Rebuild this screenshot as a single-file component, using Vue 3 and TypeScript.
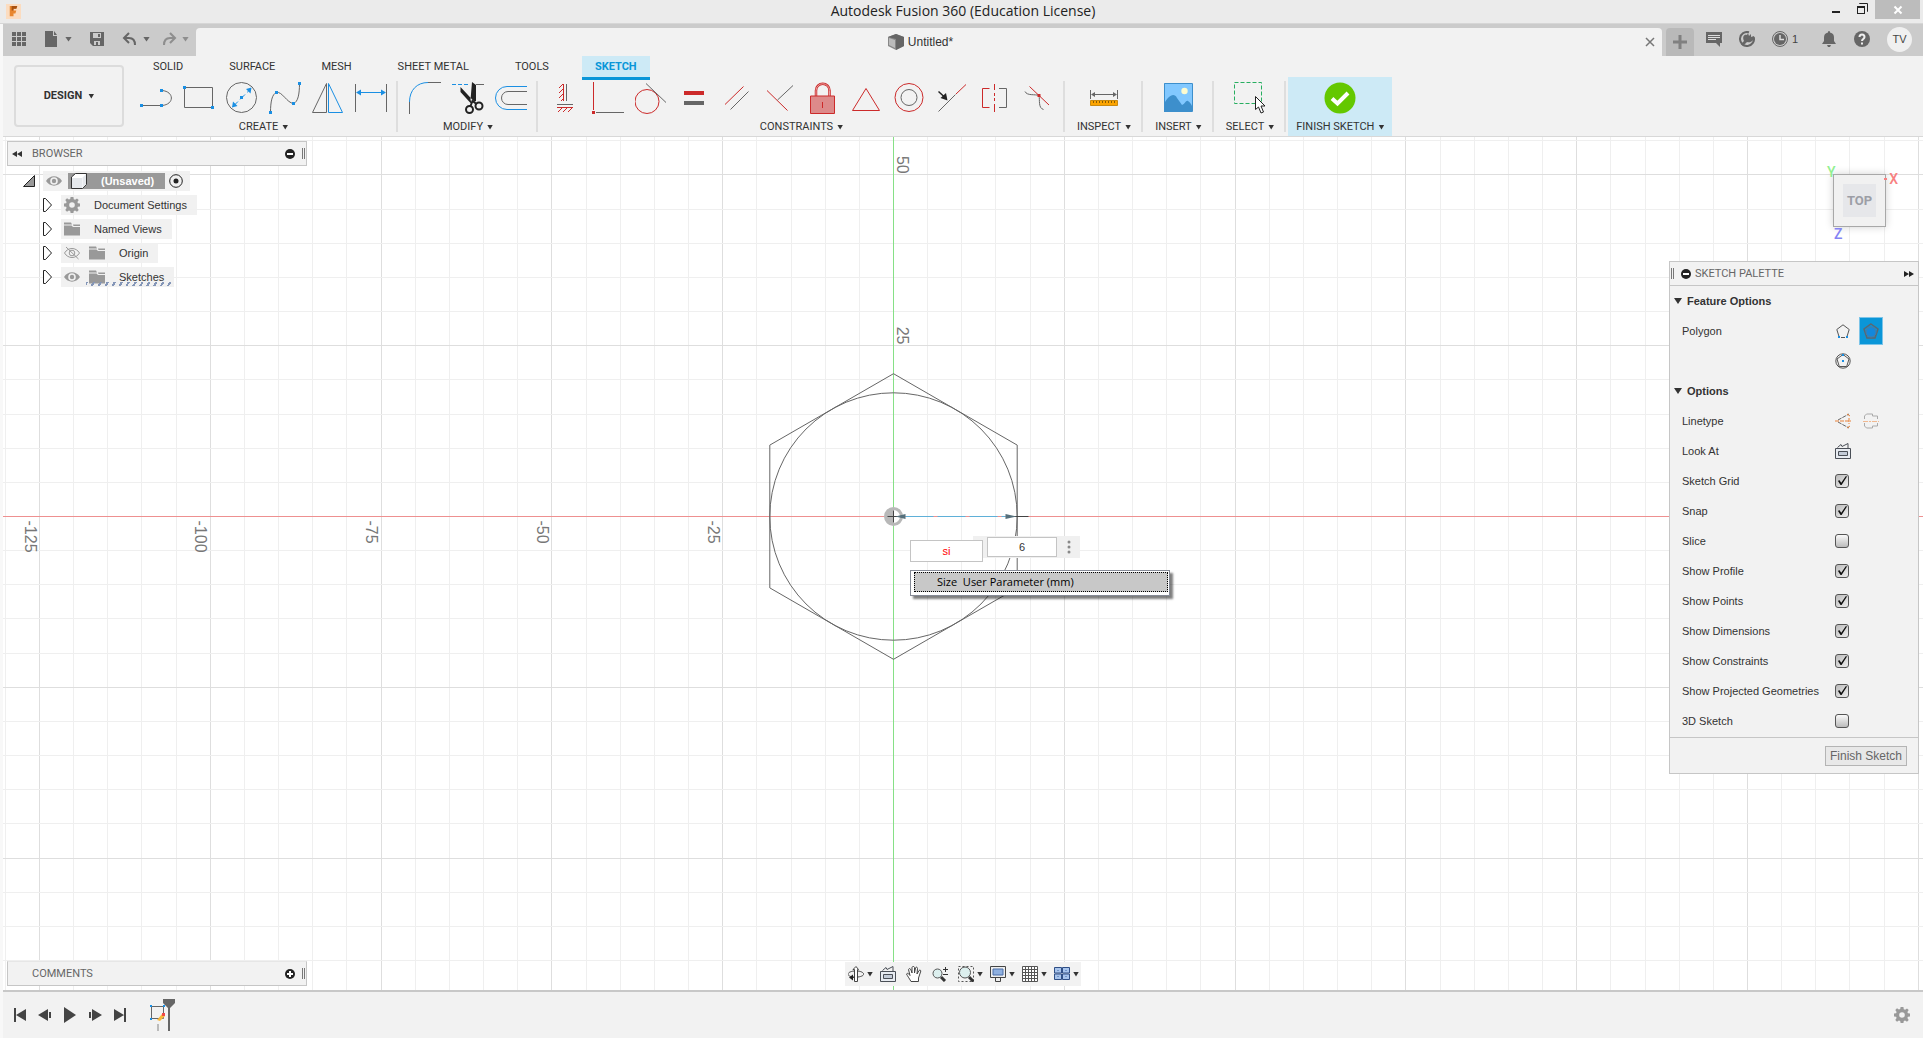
<script setup lang="ts">
import { ref } from 'vue'

interface Tool { name: string; art: string }
interface Group { label: string; tools: Tool[] }
interface TreeRow { label: string; eye?: 'on' | 'off'; icon: 'gear' | 'folder'; marked?: boolean }
interface Option { label: string; on: boolean }

const G = 'stroke="#666"'
const B = 'stroke="#1a8fe3"'
const R = 'stroke="#cc2a2a"'
const dot = (x: number, y: number, c = '#1a8fe3') =>
  `<rect x="${x - 1.5}" y="${y - 1.5}" width="3" height="3" fill="${c}" stroke="none"/>`

const createTools: Tool[] = [
  { name: 'Line', art: `<path ${G} d="M1.5 23.5H22C34.500 22.500 34.500 9.500 22 8.500"/>${dot(1.5, 23.5)}${dot(21.5, 23.5)}${dot(21.5, 8.5)}` },
  { name: 'Rectangle', art: `<path ${G} d="M1.500 5.500h28v20h-28z"/>${dot(1.5, 5.5)}${dot(29.5, 25.5)}` },
  { name: 'Circle', art: `<circle ${G} cx="15.5" cy="15.5" r="15"/><path ${B} stroke-dasharray="7 3" d="M7 24.500L24.500 7"/><path fill="#1a8fe3" d="M25.500 5.500l-1 6-4.500-4.500zM6 25.500l1-6 4.500 4.500z"/>${dot(15.5, 15.5)}` },
  { name: 'Spline', art: `<path ${G} d="M1.500 30.500C1.500 20 3 12 7.500 10.500 13 9 18 21 24.500 21.500 29 20 30.500 12 30.500 1.500"/>${dot(1.5, 30.5)}${dot(7.5, 10.5)}${dot(24.5, 21.5)}${dot(30.5, 1.5)}` },
  { name: 'Mirror', art: `<path ${G} d="M14.500 1.500v29h-14z"/><path ${B} d="M16.500 1.500v29h14z"/>` },
  { name: 'Sketch Dimension', art: `<path ${G} d="M.5 2v28M31.500 2v28"/><path ${B} d="M2 10.500h28"/><path fill="#1a8fe3" d="M1 10.500l5-3v6zM31 10.500l-5-3v6z"/>` },
]
const modifyTools: Tool[] = [
  { name: 'Fillet', art: `<path ${G} d="M.5 32V20M19 .5h13"/><path ${B} d="M.5 20C.5 8 8 .5 19 .5"/>` },
  { name: 'Trim', art: `<path ${B} d="M0 2.500h16" stroke-dasharray="4 2"/><path ${G} d="M24 2.500h8"/><path fill="#222" d="M8.500 5v5l10 11 4-1zM20 0l4 3v16l-4 2-1.500-3z"/><circle cx="17.500" cy="27.500" r="3.500" stroke="#222" stroke-width="2"/><circle cx="27" cy="24" r="3.500" stroke="#222" stroke-width="2"/><path stroke="#222" stroke-width="2" d="M18.500 24l2-5 4 3"/>` },
  { name: 'Offset', art: `<path ${B} d="M32 4.500H12a11.500 11.500 0 0 0 0 23h20"/><path ${G} d="M32 9.500H13a6.500 6.500 0 0 0 0 13h19"/>` },
]
const constraintTools: Tool[] = [
  { name: 'Horizontal/Vertical', art: `<path ${R} d="M14.500 2v17M14 2l-4 4M14 7l-4 4M14 12l-4 4M14 17l-2 2M8 25.500h16M13 26l-4 4M18 26l-4 4M23 26l-4 4"/><path ${G} d="M17.500 2v17M8 22.500h16"/>` },
  { name: 'Coincident', art: `<path ${R} d="M1.500 0v28"/><path ${G} d="M4 30.500h28"/>${dot(1.5, 30.5, '#cc2a2a')}` },
  { name: 'Tangent', art: `<circle ${R} cx="12" cy="19.500" r="12"/><path ${G} d="M11 1.500l20 19"/>` },
  { name: 'Equal', art: `<path fill="#cc2a2a" d="M6 9h20v4H6z"/><path fill="#666" d="M6 19h20v4H6z"/>` },
  { name: 'Parallel', art: `<path ${R} d="M4 22.500l18.500-18"/><path ${G} d="M9.500 27.500l18-18"/>` },
  { name: 'Perpendicular', art: `<path ${R} d="M3 8.500l20.500 20"/><path ${G} d="M13.500 18l15.500-14.500"/>` },
  { name: 'Fix', art: `<path stroke="#cc2a2a" stroke-width="2.500" d="M9 14V8.500a6.500 6.500 0 0 1 13.500 0V14"/><path stroke="#e8a0a0" stroke-width="1" d="M9 14V8.500a6.500 6.500 0 0 1 13.500 0V14"/><path fill="#dd8a8a" ${R} d="M3.500 14h24v17.500h-24z"/><path ${R} d="M15.500 20v6"/>` },
  { name: 'Midpoint', art: `<path ${R} d="M16 6.500l13.500 22h-27z"/>` },
  { name: 'Concentric', art: `<circle ${R} cx="16" cy="15.500" r="14"/><circle ${G} cx="16" cy="15.500" r="8"/>` },
  { name: 'Collinear', art: `<path ${G} d="M2.500 29.500l17-17"/><path ${R} d="M20 12l10-9.500"/><path stroke="#222" stroke-width="1.500" d="M2.500 9.500L9 15.500"/><path fill="#222" d="M11.500 18.500L4.500 16 10 11z"/>` },
  { name: 'Symmetry', art: `<path ${R} d="M10.500 6.500H3.500v19h7M15.500 2v6M15.500 11v3M15.500 16v3M15.500 22v8"/><path ${G} d="M20 6.500h7.500v19H20"/>` },
  { name: 'Curvature', art: `<path ${R} d="M7.500 4.500L27 23"/><path ${G} d="M3 9.500C5 14 13 12 17 13.500 18 18 16 26 21.500 27.500"/>${dot(17, 13.5, '#cc2a2a')}` },
]
const groups: Group[] = [
  { label: 'CREATE', tools: createTools },
  { label: 'MODIFY', tools: modifyTools },
  { label: 'CONSTRAINTS', tools: constraintTools },
  { label: 'INSPECT', tools: [{ name: 'Measure', art: `<path ${G} d="M2.500 8v9M29.500 8v9M4 12.500h24"/><path fill="#666" d="M3 12.500l4-2.500v5zM29 12.500l-4-2.500v5z"/><path fill="#fca400" stroke="#c98a10" d="M2.500 18.500h27v5h-27z"/><path stroke="#8a5c00" d="M5.500 19v2M8.500 19v2M11.500 19v2M14.500 19v2M17.500 19v2M20.500 19v2M23.500 19v2M26.500 19v2"/>` }] },
  { label: 'INSERT', tools: [{ name: 'Insert', art: `<path fill="#82c8ff" d="M2 1h28v29H2z"/><circle cx="22.500" cy="9" r="3.200" fill="#fdfbd0"/><path fill="#3d8fcc" d="M2 22C6 14 12 10 15 16L20 23C23 22 24 18 26 19 28 20 29 22 30 24v6H2z"/><path stroke="#3d8fcc" d="M2.500 1.500h28v28h-28z"/>` }] },
  { label: 'SELECT', tools: [{ name: 'Select', art: `<path stroke="#27ae60" stroke-dasharray="4 2" d="M.5 .5h27v21H.5z"/><path fill="#fff" stroke="#222" d="M21.500 14.500v13l3-2.500 2.500 6 2.500-1-2.500-6h4z"/>` }] },
]
const finishArt = `<circle cx="16" cy="16" r="15.500" fill="#64c800"/><path stroke="#fff" stroke-width="4" d="M8 16.500l5.500 5L24 11"/>`

const tabs = ['SOLID', 'SURFACE', 'MESH', 'SHEET METAL', 'TOOLS', 'SKETCH']
const activeTab = ref('SKETCH')

const tree: TreeRow[] = [
  { label: 'Document Settings', icon: 'gear' },
  { label: 'Named Views', icon: 'folder' },
  { label: 'Origin', icon: 'folder', eye: 'off' },
  { label: 'Sketches', icon: 'folder', eye: 'on', marked: true },
]
const gear = `<path fill="#999" fill-rule="evenodd" d="M6.600 0h2.800l.4 2.200 1.300.5L13 1.400 14.700 3l-1.300 1.900.5 1.300 2.100.4v2.800l-2.100.4-.5 1.300 1.300 1.900-1.700 1.700-1.900-1.300-1.300.5L9.400 16H6.600l-.4-2.100-1.300-.5L3 14.700 1.300 13l1.300-1.900-.5-1.300L0 9.400V6.600l2.100-.4.5-1.300L1.300 3 3 1.300l1.900 1.300 1.300-.5zM8 5.200a2.800 2.800 0 1 0 0 5.600 2.800 2.800 0 0 0 0-5.600z"/>`
const folder = `<path fill="#999" d="M0 4.500h7.500L9 6h7v8.500H0zM0 1.500h7L8 3.500H0zM9 3.500h7V5H9.500z"/>`
const eyeOn = `<path fill="#999" fill-rule="evenodd" d="M0 8C4 1.800 12 1.800 16 8 12 14.200 4 14.200 0 8zm8-3.800a3.800 3.800 0 1 0 0 7.600 3.800 3.800 0 0 0 0-7.600z"/><circle cx="8" cy="8" r="2.200" fill="#999"/>`
const eyeOff = `<path stroke="#999" d="M.5 8C4 2 12 2 15.500 8 12 14 4 14 .5 8zM2 2l12.500 12"/><circle cx="8" cy="8" r="2.800" stroke="#999"/>`
const lookAt = `<path fill="#e8ecf2" stroke="#4a4f57" d="M.5 5.500h15v10H.5z"/><path fill="#c4ccd8" stroke="#4a4f57" d="M3.500 8.500h9v4h-9z"/><path stroke="#4a4f57" d="M2.500 4.500L6 1.500l1 2 6-3v4.500"/>`

const options = ref<Option[]>([
  { label: 'Sketch Grid', on: true },
  { label: 'Snap', on: true },
  { label: 'Slice', on: false },
  { label: 'Show Profile', on: true },
  { label: 'Show Points', on: true },
  { label: 'Show Dimensions', on: true },
  { label: 'Show Constraints', on: true },
  { label: 'Show Projected Geometries', on: true },
  { label: '3D Sketch', on: false },
])

const navTools = [
  { name: 'Orbit', menu: true, art: `<path stroke="#444" d="M6 5C-2 6-2 10.500 6 11M10 11C18 10 17 6 10 5M4 11.500h5"/><path fill="#fff" stroke="#444" d="M6.500 15.500v-12h-1.500L8 .5l2.500 3H9.500v12z"/><path fill="#222" d="M1 11.500l4-3v6z"/>` },
  { name: 'Look At', menu: false, art: lookAt },
  { name: 'Pan', menu: false, art: `<path fill="#fff" stroke="#444" d="M5 15.500C3 12 1.500 10 .5 8c1-1.500 2.500 0 3.500 1.500L2.500 3.500C3 2 4.500 2.500 5 4l1 3V1.500c.5-1.500 2-1.500 2.500 0V7l1-5c.5-1.500 2-1 2 .5L11 8l2-3.500c1-1 2.500 0 1.500 1.500L12.500 12v3.500z"/>` },
  { name: 'Zoom', menu: false, art: `<circle cx="5.500" cy="7.500" r="4.500" fill="#dcefee" stroke="#555"/><path stroke="#333" stroke-width="3" d="M9 11l4 4"/><path stroke="#333" d="M11 3.500h5M13.500 1v5M11 8.500h5"/>` },
  { name: 'Zoom Window', menu: true, art: `<path stroke="#555" stroke-dasharray="2 2" d="M.5 .5h15v15H.5z"/><circle cx="7" cy="6.500" r="5.500" fill="#dcefee" stroke="#555"/><path stroke="#333" stroke-width="3" d="M11 11l4.500 4.500"/>` },
  { name: 'Display', menu: true, art: `<path fill="#eee" stroke="#444" d="M.5 .5h15v11H.5zM5.500 12v3.500h5V12"/><path fill="#8fb0e0" stroke="#4a6ea8" d="M3 3h10v6H3z"/>` },
  { name: 'Grid', menu: true, art: `<path fill="#fff" stroke="#555" d="M.5 .5h15v15H.5zM3.500 1v14M6.500 1v14M9.500 1v14M12.500 1v14M1 3.500h14M1 6.500h14M1 9.500h14M1 12.500h14"/>` },
  { name: 'Viewports', menu: true, art: `<path fill="#a8c4ec" stroke="#2f4f86" d="M.5 1.500h7v5.500h-7zM8.500 1.500h7v5.500h-7zM.5 8h7v5.500h-7zM8.500 8h7v5.500h-7z"/><path stroke="#6f93c8" d="M3 4.500h2M11 4.500h2M3 10.500h2M11 10.500h2"/>` },
]
const playback = [
  { name: 'Go to start', art: `<path fill="#444" d="M2 1h2v14H2zM14 2v12L4 8z"/>` },
  { name: 'Step back', art: `<path fill="#444" d="M11 2v12L1 8zM12 5h2v6h-2z"/>` },
  { name: 'Play', art: `<path fill="#444" d="M2 0v16l12-8z"/>` },
  { name: 'Step forward', art: `<path fill="#444" d="M5 2v12l10-6zM2 5h2v6H2z"/>` },
  { name: 'Go to end', art: `<path fill="#444" d="M2 2v12l10-6zM12 1h2v14h-2z"/>` },
]

/* Sketch plane: 25 mm between major lines, five minor cells in each */
const ox = 890.5
const oy = 379.5
const cell = 34.16
const range = (n: number) => Array.from({ length: n }, (_, i) => i)
const cols = range(57).map(i => i - 26).map(i => ({ x: Math.round(ox + i * cell - 0.5) + 0.5, major: i % 5 === 0 }))
const rows = range(26).map(i => i - 11).map(i => ({ y: Math.round(oy + i * cell - 0.5) + 0.5, major: i % 5 === 0 }))
const xLabels = [-125, -100, -75, -50, -25]
const yLabels = [50, 25]
const hex = range(6).map(i => {
  const a = Math.PI / 6 + (i * Math.PI) / 3
  return `${(ox + 142.8 * Math.cos(a)).toFixed(1)},${(oy + 142.8 * Math.sin(a)).toFixed(1)}`
}).join(' ')

const sides = ref('6')
const size = ref('si')
</script>

<template>
  <div class="app">
    <header class="titlebar">
      <svg class="logo" viewBox="0 0 16 16"><path fill="#fbdcc0" d="M0 0h16v16H0z" /><path fill="#e8862e" d="M4 2h8l-1 3H8v2h3l-1 3H8v3H4z" /><path fill="#a8500f" d="M6 2h6l-1 3H8v2H6z" /></svg>
      <h1>Autodesk Fusion 360 (Education License)</h1>
      <div class="window-buttons">
        <button aria-label="Minimize"><svg viewBox="0 0 12 12"><path fill="#222" d="M2 8h8v2H2z" /></svg></button>
        <button aria-label="Restore"><svg viewBox="0 0 12 12" fill="none"><path stroke="#222" d="M3.500 1V.5h8v8H11" /><path fill="#222" fill-rule="evenodd" d="M1 3h8v8H1zM2 5v5h6V5z" /></svg></button>
        <button class="close" aria-label="Close"><svg viewBox="0 0 12 12"><path stroke="#fff" stroke-width="2" d="M2.500 2.500l7 7M9.500 2.500l-7 7" /></svg></button>
      </div>
    </header>

    <div class="main">
      <div class="tabbar">
        <div class="quick">
          <button aria-label="Data panel"><svg class="i16" viewBox="0 0 16 16"><path fill="#666" d="M1 1h4v4H1zM6 1h4v4H6zM11 1h4v4h-4zM1 6h4v4H1zM6 6h4v4H6zM11 6h4v4h-4zM1 11h4v4H1zM6 11h4v4H6zM11 11h4v4h-4z" /></svg></button>
          <button class="has-menu" aria-label="File"><svg class="i16" viewBox="0 0 16 16"><path fill="#666" d="M1 0h8v5h4v11H1zM10 0l3 4h-3z" /></svg><i class="caret" /></button>
          <button aria-label="Save"><svg class="i16" viewBox="0 0 16 16"><path fill="#666" fill-rule="evenodd" d="M1 1h14v14H4l-3-3zM4 2v5h8V2zM5 10v4h2v-3h2v3h2v-4zM9 3h2v3H9z" /></svg></button>
          <button class="has-menu" aria-label="Undo"><svg class="i16" viewBox="0 0 16 16" fill="none"><path stroke="#666" stroke-width="2" d="M3 7h4c4 0 6 2 6 7M7 2L2 7l5 5" /></svg><i class="caret" /></button>
          <button class="has-menu dim" aria-label="Redo"><svg class="i16" viewBox="0 0 16 16" fill="none"><path stroke="#666" stroke-width="2" d="M13 7H9c-4 0-6 2-6 7M9 2l5 5-5 5" /></svg><i class="caret" /></button>
        </div>
        <div class="doc-tab">
          <span class="doc-name"><svg class="i16" viewBox="0 0 16 16"><path fill="#888" d="M8 0l8 3v9l-8 4-8-4V3z" /><path fill="#666" d="M8 0l8 3v9l-8 4V5L0 3z" /><path fill="#bbb" d="M1 4l6 2v8l-6-3z" /></svg>Untitled*</span>
          <button class="tab-close" aria-label="Close tab"><svg viewBox="0 0 10 10"><path stroke="#777" stroke-width="1.500" d="M1 1l8 8M9 1L1 9" /></svg></button>
        </div>
        <button class="new-tab" aria-label="New tab"><svg viewBox="0 0 14 14"><path fill="#808080" d="M5.500 0h3v5.500H14v3H8.500V14h-3V8.500H0v-3h5.500z" /></svg></button>
        <div class="account">
          <button aria-label="Comments"><svg class="i16" viewBox="0 0 16 16"><path fill="#666" d="M0 1h16v11h-2v4l-4-4H0z" /><path stroke="#ddd" d="M2 4.500h12M2 6.500h12M2 8.500h8" /></svg></button>
          <button aria-label="Extensions"><svg class="i16" viewBox="0 0 16 16" fill="none"><path stroke="#666" stroke-width="2" d="M10 1.300A7 7 0 1 0 14.700 6" /><path fill="#666" d="M2 13l3-3C3 6 5 3 8 4l1-2 1 3 2-2 0 3 3-1c0 5-3 7-7 6l-4 4z" /></svg></button>
          <button class="jobs" aria-label="Job status"><svg class="i16" viewBox="0 0 16 16" fill="none"><circle cx="8" cy="8" r="7.500" stroke="#666" /><circle cx="8" cy="8" r="6" fill="#666" /><path stroke="#ddd" stroke-width="1.500" d="M8 4v4.500h4" /></svg>1</button>
          <button aria-label="Notifications"><svg class="i16" viewBox="0 0 16 16"><path fill="#666" d="M8 0c1 0 1 1 1 1.500 3 .5 4 2.500 4 5V10l2 3H1l2-3V6.500c0-2.500 1-4.500 4-5C7 1 7 0 8 0zM6 14h4l-1 2H7z" /></svg></button>
          <button aria-label="Help"><svg class="i16" viewBox="0 0 16 16" fill="none"><circle cx="8" cy="8" r="8" fill="#666" /><path stroke="#eee" stroke-width="2" d="M5.500 6c0-3.500 5-3.500 5 0C10.500 8 8 8 8 10M8 11.500v2" /></svg></button>
          <button class="avatar">TV</button>
        </div>
      </div>

      <div class="ribbon">
        <button class="workspace">DESIGN<i class="caret" /></button>
        <div class="ribbon-body">
          <nav class="tabs">
            <button v-for="t in tabs" :key="t" :class="{ active: t === activeTab }" @click="activeTab = t">{{ t }}</button>
          </nav>
          <div class="groups">
            <section v-for="g in groups" :key="g.label" class="group" :class="{ single: g.tools.length === 1 }">
              <div class="tools">
                <button v-for="t in g.tools" :key="t.name" :aria-label="t.name"><svg class="i32" viewBox="0 0 32 32" fill="none" v-html="t.art" /></button>
              </div>
              <button class="label">{{ g.label }}<i class="caret" /></button>
            </section>
            <section class="group finish">
              <div class="tools"><button aria-label="Finish Sketch"><svg class="i32" viewBox="0 0 32 32" fill="none" v-html="finishArt" /></button></div>
              <button class="label">FINISH SKETCH<i class="caret" /></button>
            </section>
          </div>
        </div>
      </div>

      <main class="canvas">
        <svg class="plane" viewBox="0 0 1920 853" preserveAspectRatio="xMinYMin slice" fill="none">
          <g shape-rendering="crispEdges">
            <line v-for="c in cols" :key="'c' + c.x" :x1="c.x" y1="0" :x2="c.x" y2="853" :stroke="c.major ? '#dedede' : '#efefef'" />
            <line v-for="r in rows" :key="'r' + r.y" x1="0" :y1="r.y" x2="1920" :y2="r.y" :stroke="r.major ? '#dedede' : '#efefef'" />
            <line x1="0" :y1="oy" x2="1920" :y2="oy" stroke="#ee9090" />
            <line :x1="ox" y1="0" :x2="ox" y2="853" stroke="#86e086" />
          </g>
          <g class="axis">
            <text v-for="v in xLabels" :key="v" :transform="`translate(${ox + v * 6.832 - 15} ${oy + 4}) rotate(90)`">{{ v }}</text>
            <text v-for="v in yLabels" :key="v" :transform="`translate(${ox + 3} ${oy - v * 6.832 - 19}) rotate(90)`">{{ v }}</text>
          </g>
          <circle :cx="ox" :cy="oy" r="8" fill="#fff" stroke="#b8b8b8" stroke-width="3" />
          <path fill="#b8b8b8" :d="`M${ox} ${oy}h-8a8 8 0 0 0 8 8zM${ox} ${oy}v-8a8 8 0 0 0-8 8z`" />
          <path stroke="#444" :d="`M${ox - 6} ${oy}h12M${ox} ${oy - 6}v12`" />
          <polygon :points="hex" stroke="#666" stroke-width="1" />
          <circle :cx="ox" :cy="oy" r="123.7" stroke="#666" />
          <path stroke="#5fb0d8" :d="`M${ox + 12} ${oy}h100`" stroke-dasharray="28 4" />
          <path stroke="#444" :d="`M${ox + 120} ${oy}h15`" />
          <path fill="#56707c" :d="`M${ox + 2} ${oy}l10-2.500v5zM${ox + 123} ${oy}l-11-2.500v5z`" />
        </svg>

        <section class="browser">
          <header class="panel-head">
            <svg class="i10" viewBox="0 0 10 10"><path fill="#333" d="M5 2v6L0 5zM10 2v6L5 5z" /></svg>
            <h2>BROWSER</h2>
            <svg class="i10" viewBox="0 0 10 10"><circle cx="5" cy="5" r="5" fill="#222" /><path fill="#fff" d="M2 4h6v2H2z" /></svg>
            <i class="grip" />
          </header>
          <ul class="tree">
            <li class="root">
              <svg class="i12" viewBox="0 0 12 12"><path fill="#999" stroke="#222" d="M11.500 .5v11H.5z" /></svg>
              <div class="node">
                <svg class="i16" viewBox="0 0 16 16" v-html="eyeOn" />
                <span class="doc"><svg class="i16" viewBox="0 0 16 16"><path fill="#fff" stroke="#333" d="M.5 4l4-3.500h11v11l-4 4H.5z" /><path fill="#d4d8e0" d="M11.500 4.500l3.500-3.500v10.500l-3.500 3.500zM1 5h10v10H1z" opacity=".6" /></svg>(Unsaved)</span>
                <svg class="i14" viewBox="0 0 14 14" fill="none"><circle cx="7" cy="7" r="6.300" stroke="#222" /><circle cx="7" cy="7" r="2.500" fill="#222" /></svg>
              </div>
            </li>
            <li v-for="row in tree" :key="row.label">
              <svg class="expander" viewBox="0 0 9 14"><path fill="#fff" stroke="#222" d="M.5 .5h2l6 6.500-6 6.500h-2z" /></svg>
              <div class="node" :class="{ marked: row.marked }">
                <svg v-if="row.eye" class="i16 eye" viewBox="0 0 16 16" fill="none" v-html="row.eye === 'on' ? eyeOn : eyeOff" />
                <svg class="i16" viewBox="0 0 16 16" v-html="row.icon === 'gear' ? gear : folder" />
                <span>{{ row.label }}</span>
              </div>
            </li>
          </ul>
        </section>

        <div class="cube">
          <span class="y">Y</span><span class="x">X</span><span class="z">Z</span>
          <button><span>TOP</span></button>
        </div>

        <aside class="palette">
          <header class="panel-head">
            <i class="grip" />
            <svg class="i10" viewBox="0 0 10 10"><circle cx="5" cy="5" r="5" fill="#222" /><path fill="#fff" d="M2 4h6v2H2z" /></svg>
            <h2>SKETCH PALETTE</h2>
            <svg class="i10" viewBox="0 0 10 10"><path fill="#222" d="M0 2v6l5-3zM5 2v6l5-3z" /></svg>
          </header>
          <h3><i class="caret" />Feature Options</h3>
          <div class="row tall">
            <span>Polygon</span>
            <div class="choices">
              <button aria-label="Circumscribed"><svg class="i14" viewBox="0 0 14 14" fill="none"><path stroke="#555" d="M3 12.500L.8 5.500 7 .8l6.200 4.700-2.200 7" /><path stroke="#555" d="M5 13.500h4" />
                <path fill="#1a8fe3" d="M2 12h2v2H2zM10 12h2v2h-2z" /></svg></button>
              <button class="picked" aria-label="Inscribed"><svg class="i16" viewBox="0 0 16 16" fill="none"><path stroke="#5d6670" stroke-width="1.500" d="M8 1l7 5-3 9H4L1 6z" /><circle cx="8" cy="9" r="5" fill="#1387dc" stroke="#4b7ba4" /></svg></button>
              <button aria-label="Edge"><svg class="i16" viewBox="0 0 16 16" fill="none"><circle cx="8" cy="8" r="7.200" stroke="#555" /><path stroke="#555" d="M8 1.500l6 4.500-2.300 7.500H4.300L2 6z" /><path fill="#1a8fe3" d="M7 7h2v2H7zM7 1h2v2H7z" /></svg></button>
            </div>
          </div>
          <h3><i class="caret" />Options</h3>
          <div class="row">
            <span>Linetype</span>
            <div class="choices">
              <button aria-label="Construction"><svg class="i16" viewBox="0 0 16 16" fill="none"><path stroke="#666" stroke-dasharray="4 1" d="M3 7L14 1M3 9l11 6" /><path stroke="#e8823a" stroke-dasharray="4 1" d="M0 8h16M14 5v6M12 1l3 2M12 15l3-2" /></svg></button>
              <button aria-label="Centerline"><svg class="i16" viewBox="0 0 16 16" fill="none"><path stroke="#aaa" d="M1.500 6V3l2-2h6v2h5v3M1.500 10v3l2 2h6v-2h5v-3" /><path stroke="#f0b890" stroke-dasharray="5 1 2 1" d="M0 8.500h16" /></svg></button>
            </div>
          </div>
          <div class="row">
            <span>Look At</span>
            <div class="choices"><button aria-label="Look At"><svg class="i16" viewBox="0 0 16 16" fill="none" v-html="lookAt" /></button></div>
          </div>
          <label v-for="o in options" :key="o.label" class="row">
            <span>{{ o.label }}</span>
            <input v-model="o.on" type="checkbox">
          </label>
          <footer><button>Finish Sketch</button></footer>
        </aside>

        <div class="hud">
          <input v-model="size" class="size" aria-label="Size">
          <div class="sides">
            <input v-model="sides" aria-label="Sides">
            <button aria-label="More"><svg viewBox="0 0 4 16"><circle cx="2" cy="3" r="1.500" fill="#888" /><circle cx="2" cy="8" r="1.500" fill="#888" /><circle cx="2" cy="13" r="1.500" fill="#888" /></svg></button>
          </div>
          <ul class="suggest"><li>Size&nbsp; User Parameter (mm)</li></ul>
        </div>

        <section class="comments">
          <header class="panel-head">
            <i class="i10" />
            <h2>COMMENTS</h2>
            <svg class="i10" viewBox="0 0 10 10"><circle cx="5" cy="5" r="5" fill="#222" /><path stroke="#fff" stroke-width="2" d="M2 5h6M5 2v6" /></svg>
            <i class="grip" />
          </header>
        </section>

        <div class="navbar">
          <button v-for="n in navTools" :key="n.name" :aria-label="n.name" :class="{ wide: n.menu }"><svg class="i16" viewBox="0 0 16 16" fill="none" v-html="n.art" /><i v-if="n.menu" class="caret" /></button>
        </div>
      </main>

      <footer class="timeline">
        <button v-for="p in playback" :key="p.name" :aria-label="p.name"><svg class="i16" viewBox="0 0 16 16" v-html="p.art" /></button>
        <svg class="feature" viewBox="0 0 28 32" fill="none">
          <path stroke="#666" d="M3.500 7.500h12v12h-12z" /><path fill="#1a8fe3" d="M2 6h2v2H2zM15 6h2v2h-2zM2 19h2v2H2z" />
          <path fill="#f8b83c" d="M9 21l5-6 3 2-5 5z" /><path fill="#f04848" d="M14 14h3v3h-3z" />
          <path fill="#bbb" d="M9 25h2v7H9z" /><path fill="#666" d="M15 0h12v4l-5 5v23h-2V9l-5-5z" />
        </svg>
        <button class="settings" aria-label="Settings"><svg class="i16" viewBox="0 0 16 16" v-html="gear" /></button>
      </footer>
    </div>
  </div>
</template>

<style>
body { margin: 0; background: #f8f8f8; }
</style>

<style scoped>
.app { display: flex; flex-direction: column; min-height: 100vh; font: 11px/16px "Liberation Sans", Arial, sans-serif; color: #333; overflow: hidden; }
.app * { box-sizing: border-box; }
svg { display: block; flex: none; }
button { display: flex; align-items: center; justify-content: center; margin: 0; padding: 0; border: 0; background: none; color: inherit; font: inherit; }
input { margin: 0; }
h1, h2, h3, ul { margin: 0; padding: 0; list-style: none; font-weight: 400; }
.i32 { width: 32px; height: 32px; }
.i16 { width: 16px; height: 16px; }
.i14 { width: 14px; height: 14px; }
.i12 { width: 12px; height: 12px; }
.i10 { width: 10px; height: 10px; flex: none; }
.caret { width: 6px; height: 5px; flex: none; background: currentColor; clip-path: polygon(0 0, 100% 0, 50% 100%); }

.titlebar { display: grid; grid-template-columns: 1fr auto 1fr; height: 24px; padding: 0 3px 0 6px; background: #ebebeb; border-bottom: 1px solid #d6d6d6; }
.logo { width: 15px; height: 15px; margin-top: 4px; }
h1 { font: 14px/22px "Open Sans", "Noto Sans", sans-serif; color: #222; }
.window-buttons { display: flex; justify-content: flex-end; }
.window-buttons button { width: 26px; height: 18px; }
.window-buttons svg { width: 12px; height: 12px; }
.window-buttons .close { width: 45px; height: 19px; background: #bcbcbc; }

.main { flex: 1; display: flex; flex-direction: column; margin-left: 3px; }
.tabbar { display: flex; height: 32px; padding: 4px 11px 0 8px; background: #cbcbcb; }
.quick { display: flex; gap: 17px; width: 185px; height: 22px; align-items: center; color: #666; }
.quick .has-menu { gap: 5px; }
.quick .dim { opacity: .6; margin-left: -6px; }
.quick .caret { width: 7px; }
.doc-tab { flex: 1; display: flex; align-items: center; justify-content: center; padding-right: 7px; background: #f2f2f2; border-radius: 4px 4px 0 0; }
.doc-name { display: flex; align-items: center; gap: 4px; margin: 0 auto; font-size: 12px; line-height: 28px; }
.tab-close svg { width: 10px; height: 10px; }
.new-tab { width: 28px; height: 28px; margin: 0 12px 0 4px; background: #b9b9b9; border-radius: 4px 4px 0 0; }
.new-tab svg { width: 14px; height: 14px; }
.account { display: flex; align-items: center; gap: 17px; height: 22px; color: #444; }
.jobs { width: 32px; gap: 4px; justify-content: flex-start; }
.avatar { width: 25px; height: 25px; background: #f0f0f0; border-radius: 50%; }

.ribbon { display: flex; height: 81px; background: #f2f2f2; border-bottom: 1px solid #d8d8d8; font: 11px/16px Roboto, "Liberation Sans", sans-serif; }
.workspace { gap: 6px; width: 110px; height: 62px; margin: 9px 5px 0 11px; border: 2px solid #dcdcdc; border-radius: 4px; font-weight: 700; }
.tabs { display: flex; gap: 20px; height: 24px; padding-left: 11px; }
.tabs button { padding: 0 13px; border-bottom: 3px solid transparent; line-height: 21px; }
.tabs .active { background: #cdeaf6; border-bottom-color: #0a96d8; color: #0a96d8; font-weight: 700; }
.groups { display: flex; height: 56px; }
.group { position: relative; display: flex; flex-direction: column; align-items: center; gap: 5px; padding: 2px 11px 0; }
.group.single { padding: 2px 12px 0; }
.group:not(.finish)::after { content: ""; position: absolute; right: 0; top: 1px; width: 2px; height: 51px; background: #dedede; }
.tools { display: flex; gap: 11px; }
.label { gap: 4px; white-space: nowrap; }
.finish { padding: 5px 8px 0; margin: -3px 0 0 2px; background: #cdeaf6; height: 59px; }

.canvas { position: relative; flex: 1; display: flex; flex-direction: column; background: #fff; overflow: hidden; }
.plane { position: absolute; inset: 0; width: 100%; height: 100%; }
.axis text { font: 16px "Liberation Sans", Arial, sans-serif; fill: #777; }

.panel-head { display: flex; align-items: center; height: 25px; background: #f2f2f2; border: 1px solid #c6c6c6; }
.panel-head h2 { flex: 1; font: 11px/16px Roboto, "Liberation Sans", sans-serif; color: #666; }
.grip { width: 3px; height: 11px; border: solid #777; border-width: 0 1px; }
.browser { position: absolute; left: 4px; top: 4px; width: 300px; }
.browser .panel-head, .comments .panel-head { gap: 7px; padding: 0 1px 0 4px; }
.browser h2, .comments h2 { padding-left: 3px; }
.tree { display: flex; flex-direction: column; gap: 4px; padding-top: 5px; }
.tree li { display: flex; align-items: center; gap: 9px; height: 20px; padding-left: 36px; }
.tree .root { gap: 8px; padding-left: 16px; }
.expander { width: 9px; height: 14px; }
.node { position: relative; display: flex; align-items: center; height: 20px; padding: 0 10px 0 3px; background: rgba(240, 240, 240, .9); }
.node > span { margin-left: 14px; }
.node .eye { margin-right: 9px; }
.root .node { padding-right: 7px; }
.root .doc { display: flex; align-items: center; gap: 14px; height: 16px; margin: 0 4px 0 6px; padding: 0 11px 0 3px; background: #999; color: #fff; font-weight: 700; }
.marked::after { content: ""; position: absolute; left: 25px; right: 1px; bottom: 1px; height: 4px; background: repeating-linear-gradient(120deg, #8496b8 0 2px, transparent 2px 6px); }

.cube { position: absolute; right: 37px; top: 37px; width: 53px; height: 53px; }
.cube button { width: 53px; height: 53px; background: #f1f1f1; border: 1px solid #a8a8a8; box-shadow: 0 0 8px rgba(0, 0, 0, .18); }
.cube button span { width: 33px; background: #e6e7ea; color: #9c9ea6; font: 700 13px/33px Roboto, sans-serif; }
.cube > span { position: absolute; font: 500 14px/14px Roboto, sans-serif; }
.cube .y { left: -6px; top: -9px; color: #90f090; }
.cube .x { right: -12px; top: -2px; color: #f88080; }
.cube .x::before { content: ""; position: absolute; left: -5px; top: 6px; width: 3px; height: 2px; background: currentColor; }
.cube .z { left: 1px; bottom: -14px; color: #8484f4; }

.palette { position: absolute; right: 4px; top: 124px; width: 250px; background: #f2f2f2; border: 1px solid #c6c6c6; }
.palette .panel-head { gap: 4px; height: 24px; padding: 0 4px 0 1px; border-width: 0 0 1px; }
.palette .panel-head .i10:first-of-type { margin-left: 3px; }
.palette h3 { display: flex; align-items: center; gap: 5px; height: 30px; padding-left: 4px; font-size: 11px; font-weight: 700; }
.palette h3 .caret { width: 8px; height: 6px; }
.row { display: flex; min-height: 30px; padding-left: 12px; line-height: 30px; }
.row > span { width: 152px; }
.row > input { align-self: center; }
.choices { display: grid; grid-template-columns: 17px 24px; column-gap: 8px; grid-auto-rows: 30px; align-items: center; justify-items: center; }
.choices button:nth-child(odd) { width: 17px; height: 30px; }
.choices .picked { width: 24px; height: 28px; background: #0a96d8; border: 1px solid #7cc4e8; }
.row.tall { min-height: 60px; }
input[type="checkbox"] { appearance: none; position: relative; width: 14px; height: 14px; margin-left: 1px; border: 1px solid #555; border-radius: 3px; background: linear-gradient(#fafafa, #bbb); }
input[type="checkbox"]:checked { background: linear-gradient(135deg, #bbb, #eee); }
input[type="checkbox"]:checked::before { content: ""; position: absolute; left: 2px; top: 1px; width: 9px; height: 9px; background: #111; clip-path: polygon(0 55%, 14% 45%, 36% 75%, 88% 0, 100% 6%, 40% 100%, 28% 100%); }
.palette footer { display: flex; justify-content: flex-end; height: 36px; margin-top: 1px; padding: 8px 11px 0 0; border-top: 1px solid #c6c6c6; }
.palette footer button { width: 82px; height: 20px; background: #e8e8e8; border: 1px solid #b4b4b4; color: #666; font-size: 12px; }

.hud { position: absolute; left: 907px; top: 399px; width: 260px; }
.hud input { width: 70px; height: 20px; padding: 0; border: 1px solid #c4c4c4; background: #fff; color: #333; font: 11px/16px "Liberation Sans", Arial, sans-serif; text-align: center; }
.hud .sides { display: flex; align-items: center; width: 107px; height: 22px; margin-left: 63px; padding-left: 14px; gap: 10px; background: #f0f0f0; }
.sides svg { width: 4px; height: 16px; }
.hud .size { position: absolute; left: 0; top: 4px; width: 73px; height: 22px; color: #f00; }
.suggest { margin-top: 12px; padding: 1px 1px 3px 3px; background: #fff; border: 1px solid #858a96; box-shadow: 3px 3px 2px rgba(0, 0, 0, .5); }
.suggest li { height: 20px; padding-left: 22px; background: #c8c8c8; border: 1px dotted #000; color: #000; font: 11px/18px "Open Sans", "Noto Sans", sans-serif; }

.comments { position: absolute; left: 4px; bottom: 4px; width: 300px; }
.comments .panel-head { border-top-color: #e6e6e6; }
.navbar { display: flex; align-items: center; gap: 10px; height: 24px; margin: auto auto 4px; padding: 0 5px 0 3px; background: #f2f2f2; position: relative; }
.navbar button { gap: 3px; }
.navbar .wide { margin-right: -3px; }

.timeline { display: flex; align-items: center; gap: 9px; height: 48px; padding: 0 13px 0 9px; background: #f2f2f2; border-top: 2px solid #c8c8c8; }
.feature { width: 28px; height: 32px; margin-left: 11px; }
.settings { margin-left: auto; }
</style>
